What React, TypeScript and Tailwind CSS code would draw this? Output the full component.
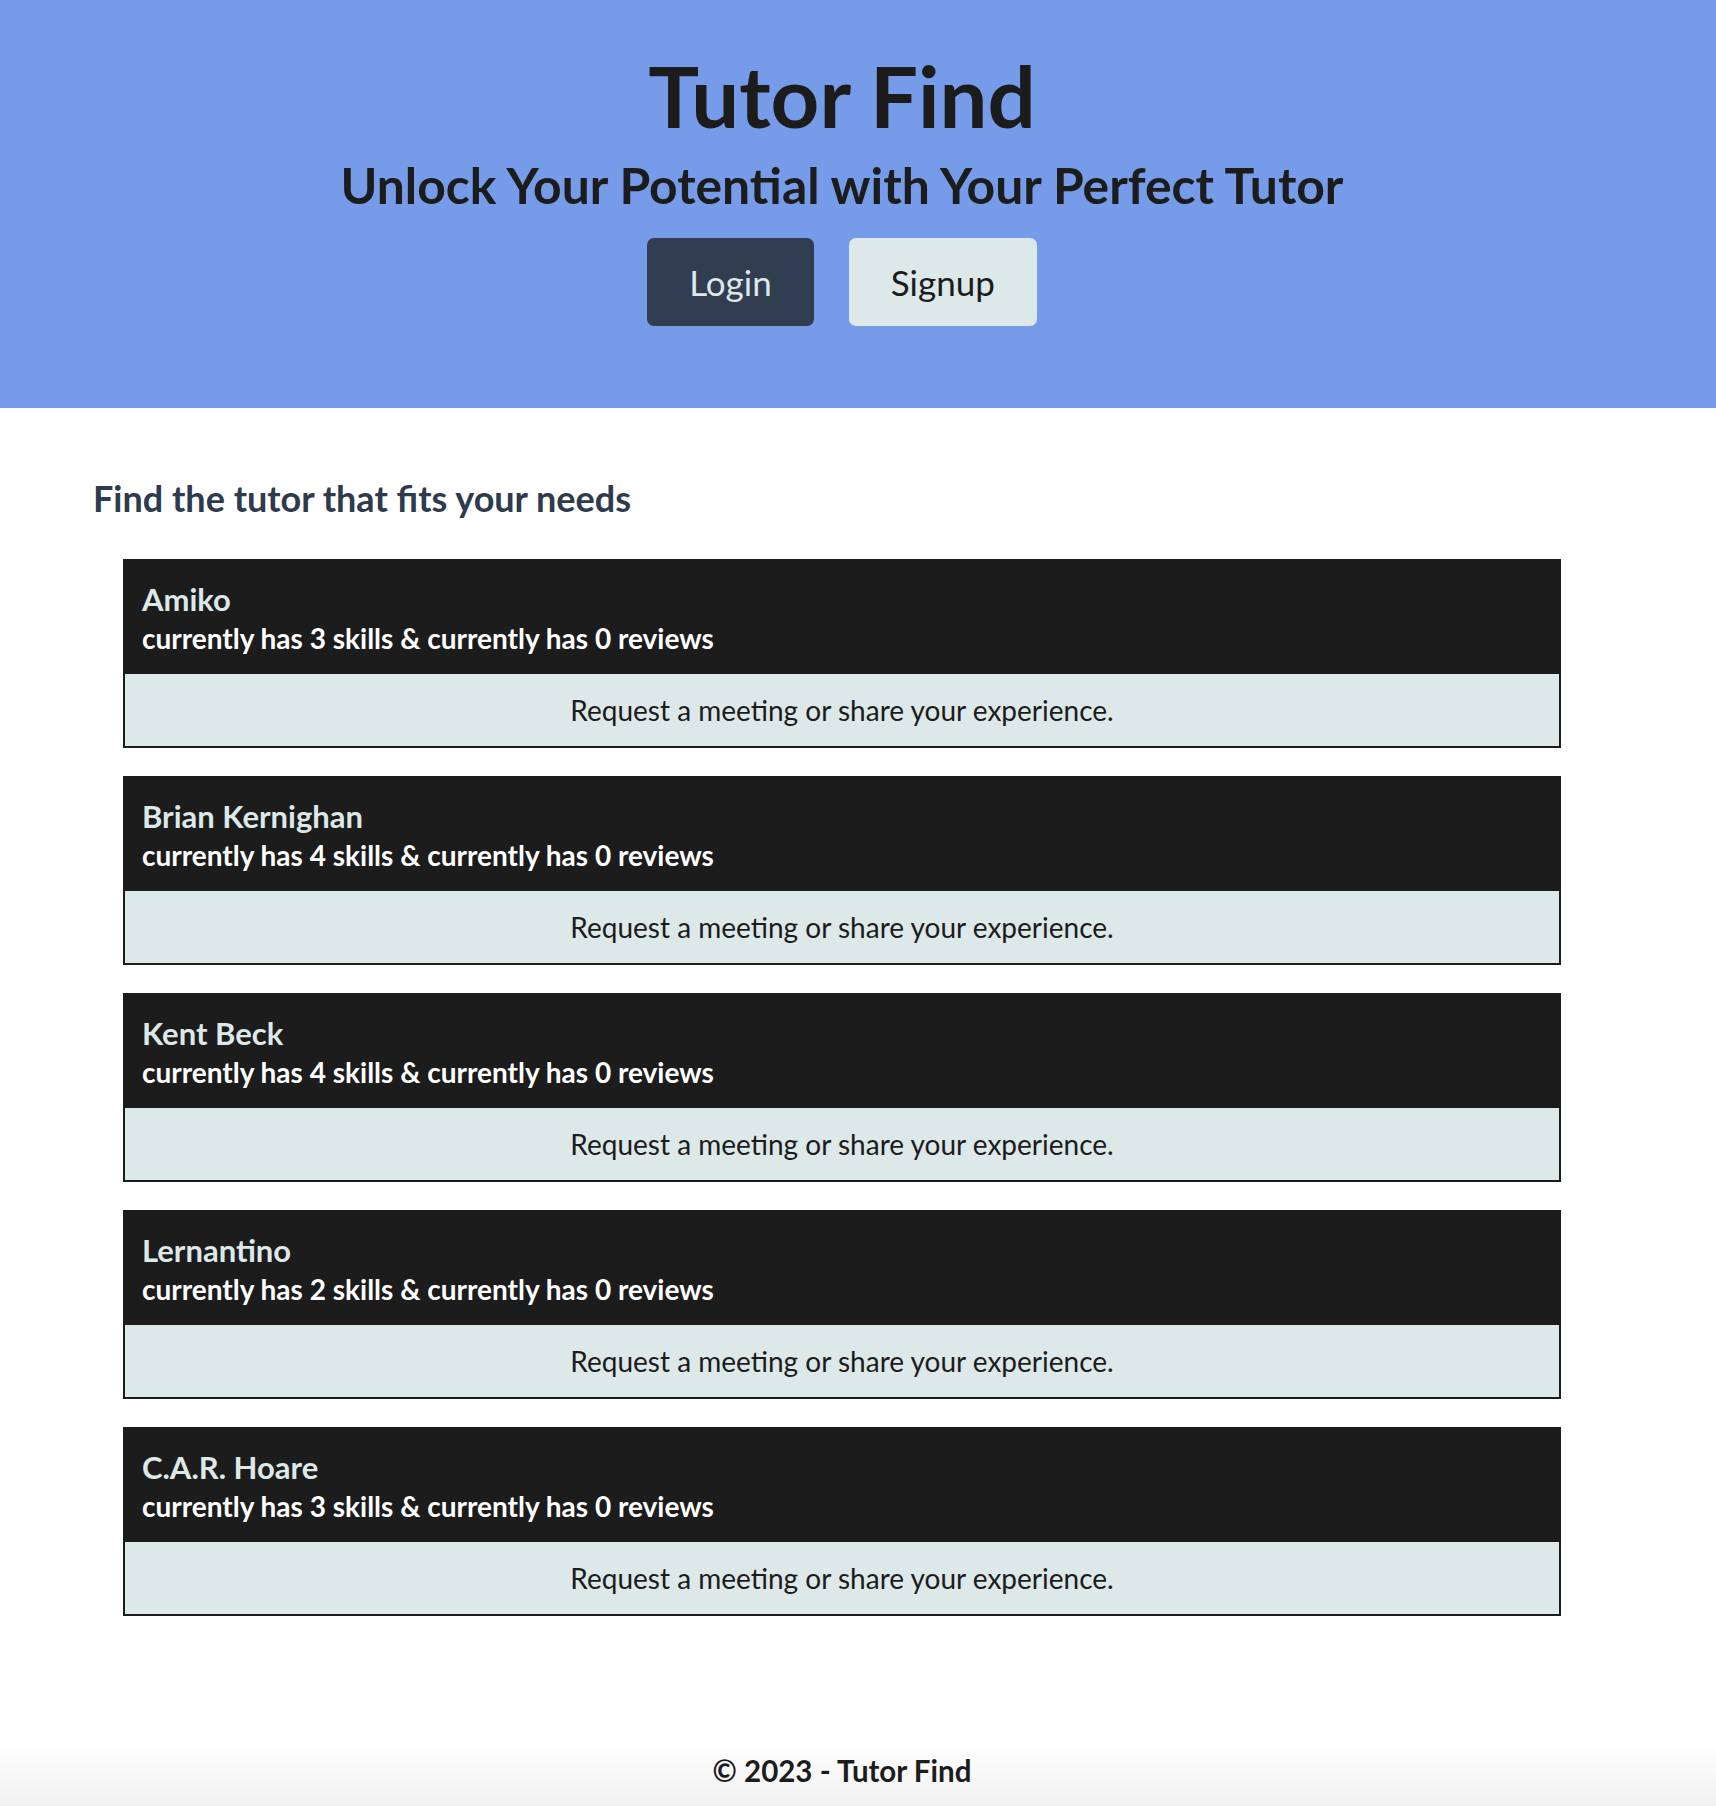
const tutors = [
  { name: "Amiko", skills: 3, reviews: 0 },
  { name: "Brian Kernighan", skills: 4, reviews: 0 },
  { name: "Kent Beck", skills: 4, reviews: 0 },
  { name: "Lernantino", skills: 2, reviews: 0 },
  { name: "C.A.R. Hoare", skills: 3, reviews: 0 },
];

export default function App() {
  return (
    <div className="min-h-screen bg-white text-[#1c1c1c] font-['Lato',sans-serif]">
      {/* Header */}
      <header className="bg-[#759be9] h-[408px]">
        <div className="w-[1684px] flex flex-col items-center pt-[45px]">
          <h1 className="text-[85px] leading-[101px] font-bold">Tutor Find</h1>
          <h2 className="mt-[10px] text-[49.8px] leading-[58px] font-bold">
            Unlock Your Potential with Your Perfect Tutor
          </h2>
          <div className="mt-[24px] flex gap-[35px]">
            <button className="h-[88px] px-[42px] rounded-[7px] bg-[#313d50] text-[#dde8e8] text-[35px] leading-[1.2]">
              Login
            </button>
            <button className="h-[88px] px-[42px] rounded-[7px] bg-[#dde8e8] text-[#1c1c1c] text-[35px] leading-[1.2]">
              Signup
            </button>
          </div>
        </div>
      </header>

      {/* Tutor list */}
      <main className="w-[1684px] pt-[70px]">
        <h3 className="pl-[93px] text-[36px] leading-[40px] font-bold text-[#2e3a4d]">
          Find the tutor that fits your needs
        </h3>
        <div className="mt-[41px] px-[123px] flex flex-col gap-[28px]">
          {tutors.map((t) => (
            <TutorCard key={t.name} {...t} />
          ))}
        </div>
      </main>

      {/* Footer */}
      <footer className="mt-[125px] h-[66px] bg-gradient-to-b from-white to-[#f1f1f1]">
        <div className="w-[1684px] pt-[12px] text-center text-[29.5px] leading-[36px] font-bold">
          © 2023 - Tutor Find
        </div>
      </footer>
    </div>
  );
}

function TutorCard({
  name,
  skills,
  reviews,
}: {
  name: string;
  skills: number;
  reviews: number;
}) {
  return (
    <div className="border-2 border-[#1c1c1c]">
      <div className="h-[113px] bg-[#1c1c1c] pl-[17px] pt-[21px] font-bold">
        <h4 className="text-[31px] leading-[34px] text-[#dde8e8]">{name}</h4>
        <p className="mt-[5px] text-[28px] leading-[34px] text-white">
          currently has {skills} skills &amp; currently has {reviews} reviews
        </p>
      </div>
      <div className="h-[72px] bg-[#dde8e8] flex items-center justify-center text-[28px] leading-[34px]">
        Request a meeting or share your experience.
      </div>
    </div>
  );
}
